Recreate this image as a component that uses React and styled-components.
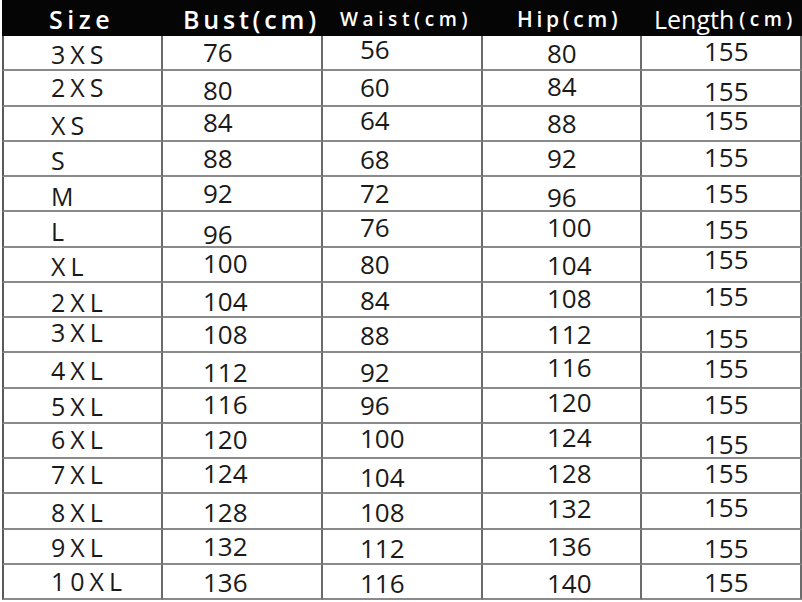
import React from "react";
import styled, { createGlobalStyle } from "styled-components";

const GlobalStyle = createGlobalStyle`
  html, body {
    margin: 0;
    padding: 0;
    background: #ffffff;
  }
  body {
    font-family: "Open Sans", "Noto Sans", "DejaVu Sans", sans-serif;
  }
`;

// left padding of the text in each column (px)
const pads = [47, 40, 37, 64, 62];

// header labels
const heads = [
  { text: "Size", size: 25, ls: 4.5, pad: 47 },
  { text: "Bust(cm)", size: 25, ls: 3.8, pad: 20 },
  { text: "Waist(cm)", size: 19, ls: 4.6, pad: 17 },
  { text: "Hip(cm)", size: 21, ls: 3.7, pad: 34 },
];

// each row: size label, bust, waist, hip, length, with a small vertical nudge per cell
const rows = [
  ["3XS", 2, "76", -1, "56", -4, "80", 0, "155", -2],
  ["2XS", 0, "80", 2, "60", -1, "84", -2, "155", 3],
  ["XS", 2, "84", -1, "64", -3, "88", 0, "155", -3],
  ["S", 2, "88", 0, "68", 1, "92", 0, "155", -1],
  ["M", 3, "92", -1, "72", -1, "96", 3, "155", -1],
  ["L", 3, "96", 5, "76", -2, "100", -2, "155", 0],
  ["XL", 2, "100", -1, "80", 0, "104", 1, "155", -5],
  ["2XL", 3, "104", 2, "84", 1, "108", -1, "155", -3],
  ["3XL", -2, "108", -1, "88", 0, "112", -1, "155", 3],
  ["4XL", 1, "112", 2, "92", 2, "116", -3, "155", -2],
  ["5XL", 1, "116", -1, "96", 0, "120", -3, "155", -1],
  ["6XL", -1, "120", -1, "100", -2, "124", -3, "155", 4],
  ["7XL", -1, "124", -3, "104", 1, "128", -3, "155", -3],
  ["8XL", 2, "128", 1, "108", 1, "132", -3, "155", -4],
  ["9XL", 1, "132", 0, "112", 2, "136", 0, "155", 2],
  ["10XL", 0, "136", 1, "116", 2, "140", 2, "155", 1],
];

const App = () => {
  return (
    <>
      <GlobalStyle />
      <Page>
        <Chart>
          {heads.map((h, i) => (
            <HeadCell key={"h" + i} $pad={h.pad}>
              <HeadText $size={h.size} $ls={h.ls}>{h.text}</HeadText>
            </HeadCell>
          ))}
          <HeadCell $pad={12}>
            <LengthWord>Length</LengthWord>
            <LengthUnit>(cm)</LengthUnit>
          </HeadCell>

          {rows.map((r, ri) =>
            [0, 1, 2, 3, 4].map((ci) => (
              <Cell key={ri + "-" + ci} $first={ci === 0} $pad={pads[ci]}>
                {ci === 0 ? (
                  <SizeText $dy={r[1]}>{r[0]}</SizeText>
                ) : (
                  <NumText $dy={r[ci * 2 + 1]}>{r[ci * 2]}</NumText>
                )}
              </Cell>
            ))
          )}
        </Chart>
      </Page>
    </>
  );
};

const Page = styled.div`
  width: 802px;
  height: 602px;
  padding-left: 2px;
  box-sizing: border-box;
  background: #ffffff;
  overflow: hidden;
`;

const Chart = styled.div`
  display: grid;
  grid-template-columns: 161px 160px 160px 159px 160px;
  grid-template-rows: 36px repeat(16, 35.25px);
`;

const HeadCell = styled.div`
  background: #050505;
  display: flex;
  align-items: center;
  padding-left: ${(p) => p.$pad}px;
  white-space: nowrap;
  overflow: hidden;
`;

const HeadText = styled.span`
  color: #ffffff;
  font-size: ${(p) => p.$size}px;
  font-weight: 600;
  letter-spacing: ${(p) => p.$ls}px;
  line-height: 1;
  transform: translateY(1px);
`;

const LengthWord = styled.span`
  color: #ffffff;
  font-size: 25px;
  font-weight: 500;
  line-height: 1;
  transform: translateY(1px);
`;

const LengthUnit = styled.span`
  color: #ffffff;
  font-size: 19px;
  font-weight: 600;
  letter-spacing: 4.5px;
  margin-left: 5px;
  line-height: 1;
  transform: translateY(1px);
`;

const Cell = styled.div`
  box-sizing: border-box;
  display: flex;
  align-items: center;
  padding-left: ${(p) => p.$pad}px;
  border-right: 2px solid #6b6b6b;
  border-bottom: 2px solid #8a8a8a;
  border-left: ${(p) => (p.$first ? "2px solid #5a5a5a" : "none")};
  white-space: nowrap;
`;

const SizeText = styled.span`
  color: #1a1a1a;
  font-size: 25px;
  font-weight: 500;
  letter-spacing: 5px;
  line-height: 1;
  transform: translateY(${(p) => p.$dy}px);
`;

const NumText = styled.span`
  color: #1a1a1a;
  font-size: 26px;
  font-weight: 500;
  line-height: 1;
  transform: translateY(${(p) => p.$dy}px);
`;

export default App;
